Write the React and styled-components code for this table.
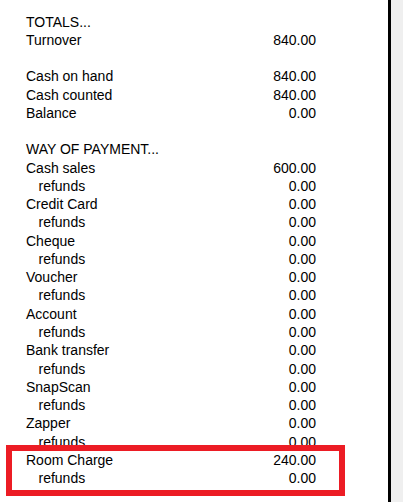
import React from "react";
import styled, { createGlobalStyle } from "styled-components";

const GlobalStyle = createGlobalStyle`
  html, body {
    margin: 0;
    padding: 0;
    background: #efefef;
  }
`;

const Screen = styled.div`
  display: flex;
  min-height: 502px;
  overflow: hidden;
`;

const Sheet = styled.div`
  width: 391px;
  flex-shrink: 0;
  background: #ffffff;
  border-right: 3px solid #000000;
  box-sizing: border-box;
  padding: 12.5px 0 0 26px;
  font-family: "Liberation Sans", Arial, sans-serif;
  font-size: 14px;
  color: #000000;
`;

const Report = styled.div`
  width: 290px;
  display: flex;
  flex-direction: column;
`;

const Row = styled.div`
  display: flex;
  justify-content: space-between;
  height: 18.28px;
  line-height: 18.28px;
  white-space: nowrap;
`;

const Label = styled.span`
  padding-left: ${props => (props.indent ? "12.5px" : "0")};
`;

const Amount = styled.span`
  text-align: right;
`;

const Highlight = styled.div`
  border: 6px solid #ec1c24;
  margin: -6px -29px 0 -20px;
  padding: 0 23px 3px 14px;
`;

const totals = [
  { label: "TOTALS..." },
  { label: "Turnover", value: "840.00" },
  { blank: true },
  { label: "Cash on hand", value: "840.00" },
  { label: "Cash counted", value: "840.00" },
  { label: "Balance", value: "0.00" },
  { blank: true },
  { label: "WAY OF PAYMENT..." }
];

const payments = [
  { name: "Cash sales", value: "600.00" },
  { name: "Credit Card", value: "0.00" },
  { name: "Cheque", value: "0.00" },
  { name: "Voucher", value: "0.00" },
  { name: "Account", value: "0.00" },
  { name: "Bank transfer", value: "0.00" },
  { name: "SnapScan", value: "0.00" },
  { name: "Zapper", value: "0.00" }
];

const PaymentRows = ({ name, value }) => (
  <>
    <Row>
      <Label>{name}</Label>
      <Amount>{value}</Amount>
    </Row>
    <Row>
      <Label indent>refunds</Label>
      <Amount>0.00</Amount>
    </Row>
  </>
);

const App = () => {
  return (
    <>
      <GlobalStyle />
      <Screen>
        <Sheet>
          <Report>
            {totals.map((item, i) =>
              item.blank ? (
                <Row key={i} />
              ) : (
                <Row key={i}>
                  <Label>{item.label}</Label>
                  {item.value && <Amount>{item.value}</Amount>}
                </Row>
              )
            )}
            {payments.map(p => (
              <PaymentRows key={p.name} name={p.name} value={p.value} />
            ))}
            <Highlight>
              <PaymentRows name="Room Charge" value="240.00" />
            </Highlight>
          </Report>
        </Sheet>
      </Screen>
    </>
  );
};

export default App;
